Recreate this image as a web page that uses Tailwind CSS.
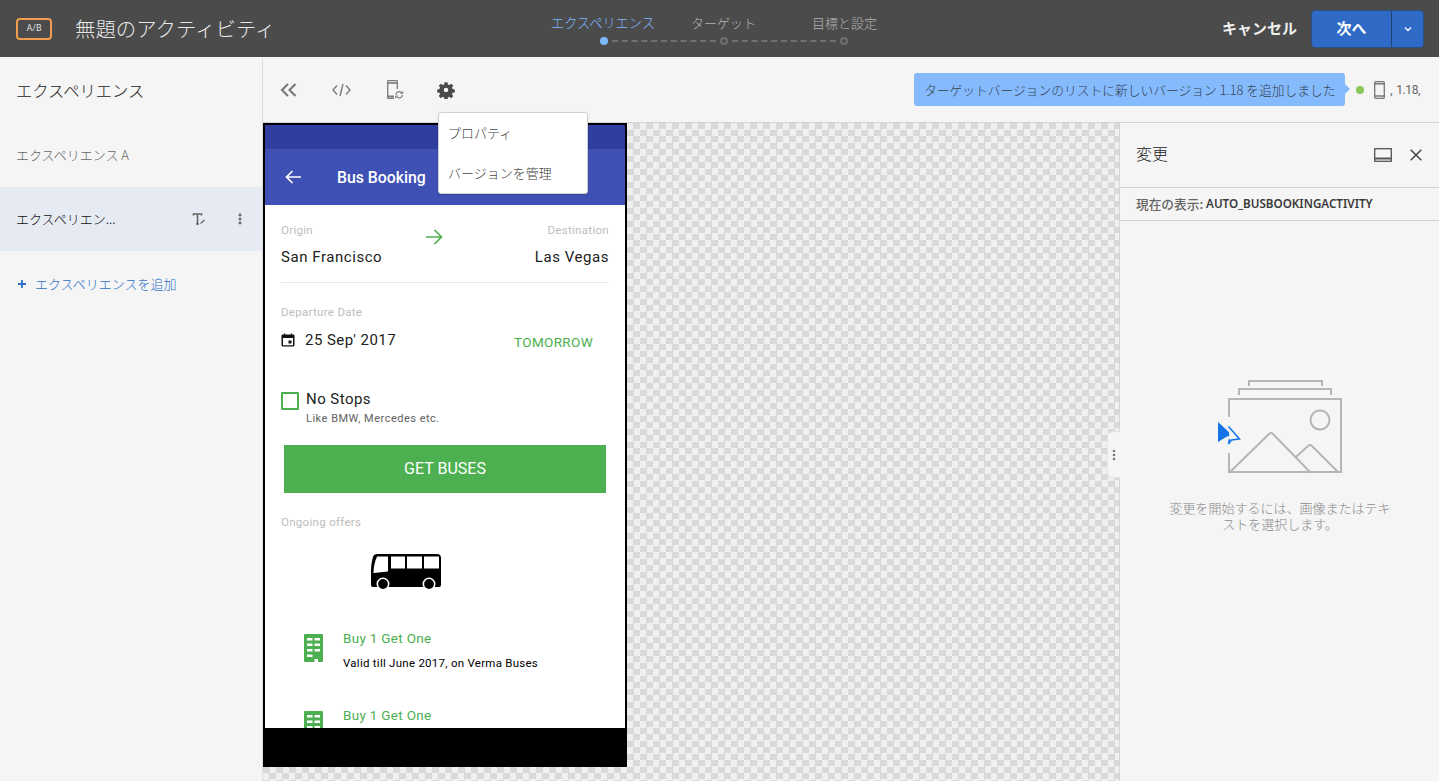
<!DOCTYPE html>
<html lang="ja">
<head>
<meta charset="utf-8">
<script src="https://cdn.jsdelivr.net/npm/@tailwindcss/browser@4"></script>
</head>
<body class="w-[1439px] h-[781px] overflow-hidden bg-[#f5f5f5] font-['Noto_Sans_CJK_JP','Noto_Sans',sans-serif] text-[#2c2c2c]">
<header class="h-[57px] bg-[#4b4b4b] flex items-center relative">
  <div class="ml-4 w-[36px] h-[22px] rounded-[4px] border-2 border-[#f29c50] flex items-center justify-center text-[9px] text-[#e0e0e0] font-['Roboto',sans-serif]">A/B</div>
  <div class="ml-[23px] text-[20.4px] font-light text-[#e8e8e8] leading-none">無題のアクティビティ</div>
  <div class="absolute left-[551px] top-[14px] w-[330px] h-[36px]">
    <div class="flex text-[13px] leading-[18px] h-[20px]">
      <span class="w-[140px] text-[13.2px] text-[#7db8ff] font-light">エクスペリエンス</span>
      <span class="w-[121px] text-[#b5b5b5] font-light">ターゲット</span>
      <span class="text-[#b5b5b5] font-light">目標と設定</span>
    </div>
    <div class="flex items-center ml-[49px] mt-[3px]">
      <span class="w-[8px] h-[8px] rounded-full bg-[#7db8ff]"></span>
      <span class="w-[104px] mx-[4px] border-t-2 border-dashed border-[#707070]"></span>
      <span class="w-[8px] h-[8px] rounded-full border-2 border-[#707070]"></span>
      <span class="w-[104px] mx-[4px] border-t-2 border-dashed border-[#707070]"></span>
      <span class="w-[8px] h-[8px] rounded-full border-2 border-[#707070]"></span>
    </div>
  </div>
  <div class="ml-auto flex items-center">
    <span class="text-[15px] font-bold text-[#f0f0f0] mr-[14px]">キャンセル</span>
    <div class="flex h-[38px] w-[113px] mr-[15px] rounded-[4px] bg-[#2f6bc6] border border-[#2a4f85] overflow-hidden text-white">
      <span class="w-[80px] flex items-center justify-center text-[15px] font-bold border-r border-[#23426f]">次へ</span>
      <span class="flex-1 flex items-center justify-center">
        <svg width="8" height="6" viewBox="0 0 8 6" fill="none" stroke="#fff" stroke-width="1.3"><path d="M1 1.500l3 3 3-3"/></svg>
      </span>
    </div>
  </div>
</header>
<div class="flex h-[724px]">
  <aside class="w-[263px] shrink-0 border-r border-[#dcdcdc] mt-[2px]">
    <h2 class="h-[64px] pb-[2px] pl-4 flex items-center text-[16.300px] font-light text-[#222] leading-none">エクスペリエンス</h2>
    <div class="h-[64px] pl-4 flex items-center text-[13px] text-[#666] font-light">エクスペリエンス A</div>
    <div class="h-[64px] pl-4 flex items-center bg-[#e6eaf2] text-[13px] font-light text-[#111]">
      <span class="w-[176px]">エクスペリエン...</span>
      <svg width="14" height="14" viewBox="0 0 14 14" fill="none" stroke="#666" stroke-width="1.600"><path d="M1.500 3.500V2h8v1.500M5.500 2v10M4 12h3"/><path d="M8.500 11.500l4-3.500" stroke-width="1.300"/></svg>
      <svg class="ml-[32px]" width="4" height="12" viewBox="0 0 4 12" fill="#666"><circle cx="2" cy="2" r="1.400"/><circle cx="2" cy="6" r="1.400"/><circle cx="2" cy="10" r="1.400"/></svg>
    </div>
    <div class="h-[66px] pl-[18px] flex items-center text-[13px] text-[#2f6fc9] font-light">
      <svg width="8" height="8" viewBox="0 0 8 8" stroke="#2f6fc9" stroke-width="1.800"><path d="M4 0v8M0 4h8"/></svg>
      <span class="ml-[9px]">エクスペリエンスを追加</span>
    </div>
  </aside>
  <main class="flex-1 min-w-0 flex flex-col relative">
    <div class="h-[66px] shrink-0 border-b border-[#d4d4d4] flex items-center relative">
      <svg class="ml-[17px]" width="17" height="14" viewBox="0 0 17 14" fill="none" stroke="#7b7b7b" stroke-width="2.200"><path d="M8 1L2 7l6 6M15.500 1l-6 6 6 6"/></svg>
      <svg class="ml-[35px]" width="19" height="14" viewBox="0 0 19 14" fill="none" stroke="#7b7b7b" stroke-width="1.400"><path d="M5 2.500L1 7l4 4.500M14 2.500L18 7l-4 4.500M11 1L8 13"/></svg>
      <svg class="ml-[36px]" width="17" height="19" viewBox="0 0 17 19" fill="none" stroke="#7b7b7b"><path d="M7 18.500H1.700a1 1 0 0 1-1-1V1.500a1 1 0 0 1 1-1h7.600a1 1 0 0 1 1 1v7.500" stroke-width="1.300"/><path d="M1 3h9" stroke-width="1.600"/><path d="M1 16.500h6" stroke-width="2"/><path d="M9 14.500a3.300 3.300 0 0 1 6-1.500M15.500 15a3.300 3.300 0 0 1-6 1.500" stroke-width="1.300"/><path d="M15.800 11.300v2.200h-2.200M8.700 18.300v-2.300h2.200" stroke-width="1"/></svg>
      <svg class="ml-[33px]" width="18" height="18" viewBox="0 0 24 24" fill="#4a4a4a"><path fill-rule="evenodd" d="M10 1.500h4l.5 3 1.900.8 2.500-1.800 2.800 2.800-1.800 2.500.8 1.900 3 .5v4l-3 .5-.8 1.900 1.800 2.500-2.800 2.800-2.500-1.800-1.900.8-.5 3h-4l-.5-3-1.900-.8-2.500 1.800-2.800-2.800 1.800-2.500-.8-1.900-3-.5v-4l3-.5.8-1.900-1.800-2.500 2.800-2.800 2.500 1.800 1.900-.8zM12 9a3 3 0 1 0 0 6 3 3 0 0 0 0-6z"/></svg>
      <div class="ml-auto relative h-[33px] w-[431px] rounded-[3px] bg-[#85bbfd] flex items-center justify-center text-[12.750px] text-[#33404f] font-light whitespace-nowrap">
        ターゲットバージョンのリストに新しいバージョン 1.18 を追加しました
        <span class="absolute right-[-5px] top-[11px] w-0 h-0 border-y-[5px] border-y-transparent border-l-[5px] border-l-[#85bbfd]"></span>
      </div>
      <span class="ml-[11px] w-[8px] h-[8px] rounded-full bg-[#8bc65a]"></span>
      <svg class="ml-[10px]" width="11" height="18" viewBox="0 0 11 18" fill="none" stroke="#777" stroke-width="1.300"><rect x=".7" y=".7" width="9.600" height="16.600" rx="1"/><path d="M.7 2.800h9.600M.7 15h9.600" stroke-width="1.400"/></svg>
      <span class="ml-[5px] mr-[19px] text-[12px] text-[#666] tracking-[-0.4px] font-['Roboto',sans-serif] flex"><span>,</span><span class="ml-[4px]">1.18,</span></span>
    </div>
    <div class="flex-1 flex min-h-0">
      <div class="w-[856px] bg-[conic-gradient(#d9d9d9_25%,#f0f0f0_0_50%,#d9d9d9_0_75%,#f0f0f0_0)] bg-[length:13px_13px] overflow-hidden font-['Roboto',sans-serif]">
        <div class="w-[364px] h-[644px] bg-black flex flex-col">
          <div class="mx-[2px] mt-[2px] h-[603px] bg-white overflow-hidden flex flex-col">
            <div class="h-[24px] shrink-0 bg-[#303f9f]"></div>
            <div class="h-[56px] shrink-0 bg-[#3f51b5] flex items-center pl-[20px] text-white">
              <svg width="16" height="14" viewBox="0 0 16 14" fill="none" stroke="#fff" stroke-width="1.700"><path d="M16 7H1.500M7.500 1L1.500 7l6 6"/></svg>
              <span class="ml-[36px] text-[15.800px] font-medium pt-[1px]">Bus Booking</span>
            </div>
            <div class="mx-[16px] h-[78px] shrink-0 border-b border-[#e6e6e6] relative pt-[16px]">
              <div class="flex justify-between text-[11.500px] leading-[18px] text-[#bdbdbd] tracking-[0.3px]"><span>Origin</span><span>Destination</span></div>
              <div class="flex justify-between mt-[8px] text-[15px] leading-[20px] text-[#212121] tracking-[0.550px]"><span>San Francisco</span><span>Las Vegas</span></div>
              <svg class="absolute left-[145px] top-[24px]" width="17" height="16" viewBox="0 0 17 16" fill="none" stroke="#4caf50" stroke-width="1.700"><path d="M0 8h15M8.500 1l7 7-7 7"/></svg>
            </div>
            <div class="px-[16px] mt-[20px] text-[11.500px] leading-[18px] text-[#bdbdbd] tracking-[0.3px]">Departure Date</div>
            <div class="px-[16px] mt-[9px] flex items-center h-[20px]">
              <svg width="14" height="14" viewBox="0 0 14 14" fill="#111"><path fill-rule="evenodd" d="M1.800 1.500H3V.5h1.200v1h5.600v-1H11v1h1.200c.7 0 1.300.6 1.300 1.200v9.600c0 .7-.6 1.200-1.300 1.200H1.800c-.7 0-1.300-.5-1.300-1.200V2.700c0-.6.6-1.200 1.300-1.200zM2 5v7.200h10V5zM7.500 7.500h3v3h-3z"/></svg>
              <span class="ml-[10px] text-[15px] text-[#212121] tracking-[0.450px]">25 Sep' 2017</span>
              <span class="ml-auto mr-[16px] mt-[5px] text-[13.500px] text-[#4caf50] tracking-[0.350px]">TOMORROW</span>
            </div>
            <div class="px-[16px] mt-[39px] flex items-start h-[40px]">
              <span class="mt-[3px] w-[18px] h-[18px] border-2 border-[#4caf50] rounded-[1px]"></span>
              <div class="ml-[7px]">
                <div class="text-[15px] leading-[20px] text-[#212121] tracking-[0.450px]">No Stops</div>
                <div class="mt-[2px] text-[11px] leading-[16px] text-[#616161] tracking-[0.500px]">Like BMW, Mercedes etc.</div>
              </div>
            </div>
            <div class="mx-[19px] mt-[18px] h-[48px] shrink-0 bg-[#4caf50] flex items-center justify-center text-[16px] text-white">GET BUSES</div>
            <div class="px-[16px] mt-[20px] text-[11.500px] leading-[18px] text-[#bdbdbd] tracking-[0.3px]">Ongoing offers</div>
            <svg class="ml-[106px] mt-[23px] shrink-0" width="70" height="37" viewBox="0 0 70 37"><path d="M6 0h60a4 4 0 0 1 4 4v27a2 2 0 0 1-2 2H2a2 2 0 0 1-2-2V18C0 12 1 6 2 3c.5-2 2-3 4-3z"/><path fill="#fff" d="M6 2.500h11v15l-14.500 1.500c0-5 1-11 3.500-16.500zM20 2.500h14v12H20zM36 2.500h15v12H36zM53 2.500h15v12H53z"/><circle cx="12" cy="30" r="5.700" fill="#000" stroke="#fff" stroke-width="1.600"/><circle cx="58" cy="30" r="5.700" fill="#000" stroke="#fff" stroke-width="1.600"/></svg>
            <div class="flex mt-[37px] pl-[39px] h-[50px] shrink-0">
              <svg class="mt-[6px]" width="19" height="28" viewBox="0 0 19 28" fill="#4caf50"><path fill-rule="evenodd" d="M1 0h17a1 1 0 0 1 1 1v26a1 1 0 0 1-1 1h-4v-3h-3.500v3H1a1 1 0 0 1-1-1V1a1 1 0 0 1 1-1zM3 4v2.500h5.500V4zM10.500 4v2.500H16V4zM3 9.500V12h5.500V9.500zM10.500 9.500V12H16V9.500zM3 15v2.500h5.500V15zM10.500 15v2.500H16V15zM3 20.500V23h5.500v-2.500z"/></svg>
              <div class="ml-[20px]">
                <div class="text-[13.500px] leading-[20px] text-[#4caf50] tracking-[0.3px]">Buy 1 Get One</div>
                <div class="mt-[6px] text-[11.500px] leading-[18px] text-black tracking-[0.260px]">Valid till June 2017, on Verma Buses</div>
              </div>
            </div>
            <div class="flex mt-[27px] pl-[39px] shrink-0">
              <svg class="mt-[6px]" width="19" height="28" viewBox="0 0 19 28" fill="#4caf50"><path fill-rule="evenodd" d="M1 0h17a1 1 0 0 1 1 1v26a1 1 0 0 1-1 1h-4v-3h-3.500v3H1a1 1 0 0 1-1-1V1a1 1 0 0 1 1-1zM3 4v2.500h5.500V4zM10.500 4v2.500H16V4zM3 9.500V12h5.500V9.500zM10.500 9.500V12H16V9.500zM3 15v2.500h5.500V15zM10.500 15v2.500H16V15zM3 20.500V23h5.500v-2.500z"/></svg>
              <div class="ml-[20px] text-[13.500px] leading-[20px] text-[#4caf50] tracking-[0.3px]">Buy 1 Get One</div>
            </div>
          </div>
        </div>
      </div>
      <aside class="flex-1 border-l border-[#d4d4d4] relative">
        <div class="h-[65px] border-b border-[#d4d4d4] flex items-center pl-4 pr-[17px]">
          <span class="text-[16px] mb-[5px] font-light text-[#222]">変更</span>
          <svg class="ml-auto" width="18" height="14" viewBox="0 0 18 14" fill="none" stroke="#555" stroke-width="1.300"><rect x=".7" y=".7" width="16.600" height="12.600"/><path d="M.7 10.500h16.600" stroke-width="2"/></svg>
          <svg class="ml-[18px]" width="12" height="12" viewBox="0 0 12 12" stroke="#444" stroke-width="1.500"><path d="M.7.7l10.600 10.600M11.300.7L.7 11.300"/></svg>
        </div>
        <div class="h-[33px] border-b border-[#d4d4d4] flex items-center pl-4 text-[12.700px] font-medium text-[#666]">現在の表示:&nbsp;<span class="text-[11.650px] text-[#3a3a3a] font-semibold font-['Noto_Sans',sans-serif]">AUTO_BUSBOOKINGACTIVITY</span></div>
        <svg class="absolute left-[108px] top-[257px]" width="115" height="94" viewBox="0 0 115 94" fill="none" stroke="#b5b5b5" stroke-width="2"><path d="M21 6V1h73v5"/><path d="M11 15V9h92v6"/><path d="M1 37V19h112v73H1V73"/><circle cx="92" cy="40" r="9.500"/><path d="M2 92l39-38q2-2 4 0l37 38M68 77l12-11q2-2 4 0l26 26"/></svg>
        <svg class="absolute left-[98px] top-[299px]" width="24" height="25" viewBox="0 0 24 25"><path d="M0 0l13 12-1 2-3 .5-9 5.500z" fill="#1473e6"/><path d="M10.500 4.500l11 12.500-8 1-3 4 1-5" fill="#f5f5f5" stroke="#1473e6" stroke-width="1.500"/></svg>
        <p class="absolute left-[48px] top-[377px] w-[224px] text-center text-[13px] leading-[16px] font-light text-[#8a8a8a]">変更を開始するには、画像またはテキストを選択します。</p>
        <div class="absolute left-[-13px] top-[308px] w-[13px] h-[47px] bg-[#f5f5f5] rounded-l-[6px] border border-r-0 border-[#e4e4e4] flex items-center justify-center">
          <svg width="4" height="12" viewBox="0 0 4 12" fill="#777"><circle cx="2" cy="2" r="1.300"/><circle cx="2" cy="6" r="1.300"/><circle cx="2" cy="10" r="1.300"/></svg>
        </div>
      </aside>
    </div>
    <div class="absolute left-[175px] top-[55px] w-[150px] h-[82px] bg-white rounded-[3px] border border-[#d0d0d0] shadow-sm text-[13px] font-light text-[#444] pl-[9px] flex flex-col">
      <span class="h-[40px] flex items-center">プロパティ</span>
      <span class="h-[40px] flex items-center">バージョンを管理</span>
    </div>
  </main>
</div>
</body>
</html>
